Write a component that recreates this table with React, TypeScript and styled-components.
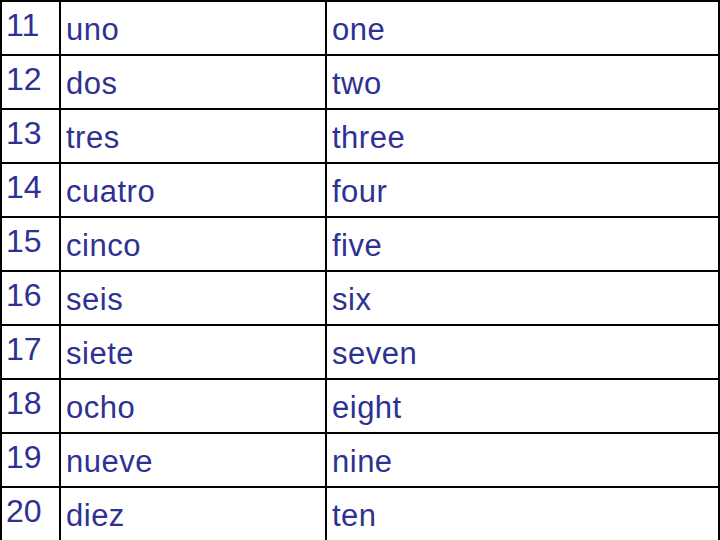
import React from 'react';
import styled, { createGlobalStyle } from 'styled-components';

const GlobalStyle = createGlobalStyle`
    html, body {
        margin: 0;
        padding: 0;
        background: #ffffff;
    }
`;

const words: [number, string, string][] = [
    [11, 'uno', 'one'],
    [12, 'dos', 'two'],
    [13, 'tres', 'three'],
    [14, 'cuatro', 'four'],
    [15, 'cinco', 'five'],
    [16, 'seis', 'six'],
    [17, 'siete', 'seven'],
    [18, 'ocho', 'eight'],
    [19, 'nueve', 'nine'],
    [20, 'diez', 'ten'],
];

function App() {
    return <>
        <GlobalStyle />
        <Table>
            {words.map(([num, es, en]) => (
                <Row key={num}>
                    <NumberCell>{num}</NumberCell>
                    <WordCell>{es}</WordCell>
                    <WordCell>{en}</WordCell>
                </Row>
            ))}
        </Table>
    </>;
}

const Table = styled.div`
    width: 720px;
    height: 540px;
    overflow: hidden;
    box-sizing: border-box;
    border-top: 2px solid #000;
    border-left: 2px solid #000;
    font-family: "Liberation Sans", Arial, sans-serif;
    color: #2e3192;
`;

const Row = styled.div`
    display: grid;
    grid-template-columns: 59px 266px 393px;
    height: 54px;
`;

const Cell = styled.div`
    box-sizing: border-box;
    border-right: 2px solid #000;
    border-bottom: 2px solid #000;
    line-height: 1;
    white-space: nowrap;
`;

const NumberCell = styled(Cell)`
    font-size: 32px;
    padding: 7px 0 0 4px;
`;

const WordCell = styled(Cell)`
    font-size: 31px;
    letter-spacing: 0.5px;
    padding: 12px 0 0 5px;
`;

export default App;
